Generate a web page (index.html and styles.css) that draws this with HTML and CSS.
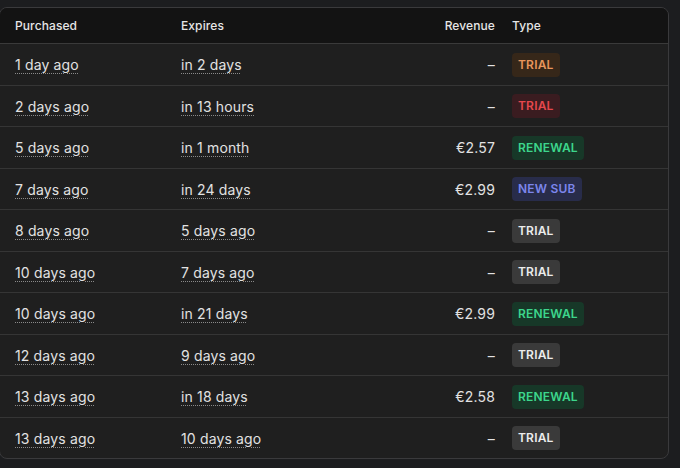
FILE: index.html
```html
<!DOCTYPE html>
<html>
<head>
<meta charset="utf-8">
<link rel="stylesheet" href="styles.css">
</head>
<body>
<div class="card">
  <div class="row head">
    <div>Purchased</div>
    <div>Expires</div>
    <div class="rev">Revenue</div>
    <div>Type</div>
  </div>
  <div class="row"><div><span class="u">1 day ago</span></div><div><span class="u">in 2 days</span></div><div class="rev">–</div><div><span class="badge orange">TRIAL</span></div></div>
  <div class="row"><div><span class="u">2 days ago</span></div><div><span class="u">in 13 hours</span></div><div class="rev">–</div><div><span class="badge red">TRIAL</span></div></div>
  <div class="row"><div><span class="u">5 days ago</span></div><div><span class="u">in 1 month</span></div><div class="rev">€2.57</div><div><span class="badge green">RENEWAL</span></div></div>
  <div class="row"><div><span class="u">7 days ago</span></div><div><span class="u">in 24 days</span></div><div class="rev">€2.99</div><div><span class="badge blue">NEW SUB</span></div></div>
  <div class="row"><div><span class="u">8 days ago</span></div><div><span class="u">5 days ago</span></div><div class="rev">–</div><div><span class="badge gray">TRIAL</span></div></div>
  <div class="row"><div><span class="u">10 days ago</span></div><div><span class="u">7 days ago</span></div><div class="rev">–</div><div><span class="badge gray">TRIAL</span></div></div>
  <div class="row"><div><span class="u">10 days ago</span></div><div><span class="u">in 21 days</span></div><div class="rev">€2.99</div><div><span class="badge green">RENEWAL</span></div></div>
  <div class="row"><div><span class="u">12 days ago</span></div><div><span class="u">9 days ago</span></div><div class="rev">–</div><div><span class="badge gray">TRIAL</span></div></div>
  <div class="row"><div><span class="u">13 days ago</span></div><div><span class="u">in 18 days</span></div><div class="rev">€2.58</div><div><span class="badge green">RENEWAL</span></div></div>
  <div class="row last"><div><span class="u">13 days ago</span></div><div><span class="u">10 days ago</span></div><div class="rev">–</div><div><span class="badge gray">TRIAL</span></div></div>
</div>
</body>
</html>
```
FILE: styles.css
```css
html, body {
  margin: 0;
  padding: 0;
  background: #1c1d1f;
  font-family: Inter, "Liberation Sans", sans-serif;
  overflow: hidden;
}
.card {
  margin: 7px 11px 0 -1px;
  border: 1px solid #3a3a3c;
  border-radius: 8px;
  background: #1f1f1f;
  overflow: hidden;
}
.row {
  display: grid;
  grid-template-columns: 166px 212px 119px 156px;
  padding-left: 15px;
  padding-top: 1px;
  align-items: center;
  height: 41.5px;
  box-sizing: border-box;
  border-bottom: 1px solid #353535;
  font-size: 14px;
  letter-spacing: 0.15px;
  color: #e2e2e2;
}
.row.last { border-bottom: none; height: 40.5px; }
.row.head {
  height: 36px;
  padding-top: 0;
  background: #131313;
  font-size: 12px;
  font-weight: 500;
  letter-spacing: 0.1px;
  color: #e6e6e6;
  border-bottom: 1px solid #3a3a3a;
}
.rev {
  text-align: right;
  padding-right: 17px;
}
.u {
  text-decoration: underline dotted #8a8a8a;
  text-underline-offset: 3px;
  text-decoration-thickness: 1px;
}
.badge {
  display: inline-block;
  font-size: 12px;
  font-weight: 600;
  line-height: 24px;
  padding: 0 6px;
  border-radius: 4px;
  letter-spacing: 0.2px;
}
.orange { color: #e8955c; background: #362719; }
.red { color: #e5484d; background: #3a1c20; }
.green { color: #3dd68c; background: #173828; }
.blue { color: #7c86ec; background: #282c4a; }
.gray { color: #ececec; background: #3a3a3a; }
```
